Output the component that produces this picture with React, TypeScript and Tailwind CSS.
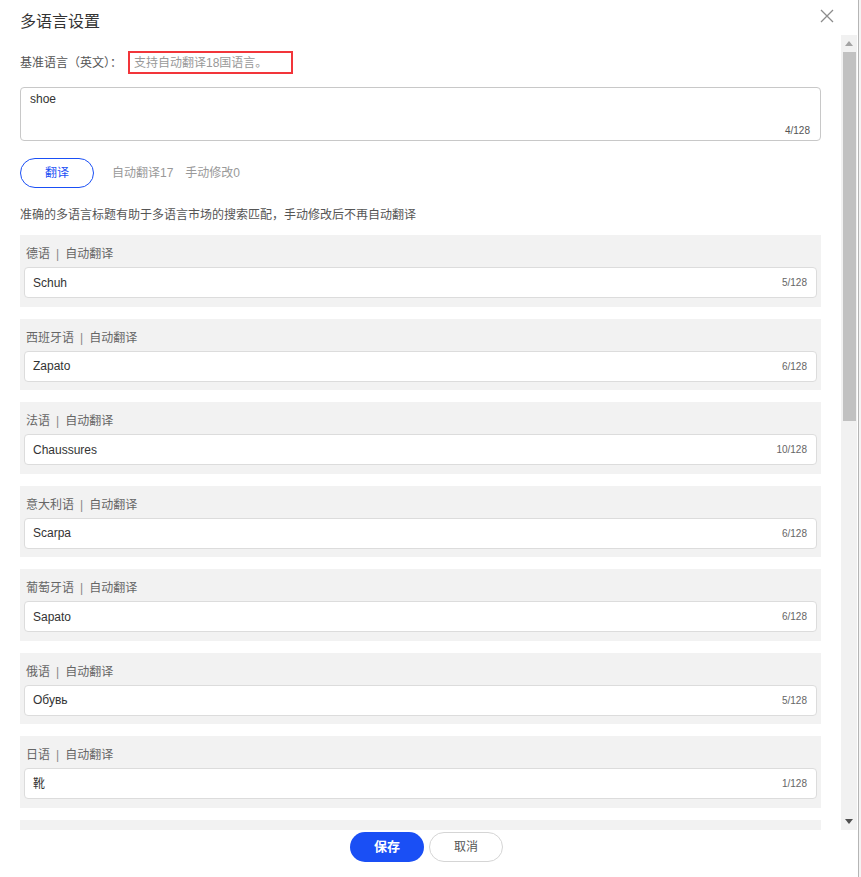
import React from "react";

const langs: { name: string; value: string; count: number }[] = [
  { name: "德语", value: "Schuh", count: 5 },
  { name: "西班牙语", value: "Zapato", count: 6 },
  { name: "法语", value: "Chaussures", count: 10 },
  { name: "意大利语", value: "Scarpa", count: 6 },
  { name: "葡萄牙语", value: "Sapato", count: 6 },
  { name: "俄语", value: "Обувь", count: 5 },
  { name: "日语", value: "靴", count: 1 },
  { name: "韩语", value: "신발", count: 2 },
  { name: "阿拉伯语", value: "حذاء", count: 4 },
  { name: "荷兰语", value: "Schoen", count: 6 },
  { name: "波兰语", value: "But", count: 3 },
  { name: "土耳其语", value: "Ayakkabı", count: 8 },
  { name: "泰语", value: "รองเท้า", count: 7 },
  { name: "越南语", value: "Giày", count: 4 },
  { name: "印尼语", value: "Sepatu", count: 6 },
  { name: "希伯来语", value: "נעל", count: 3 },
  { name: "瑞典语", value: "Sko", count: 3 },
];

function LangCard({ name, value, count }: { name: string; value: string; count: number }) {
  return (
    <div className="mb-[12px] h-[71.5px] shrink-0 bg-[#f2f2f2] px-[4px] pt-[11px]">
      <div className="flex h-[16px] items-center pl-[2px] text-[12px] leading-[16px] text-[#666]">
        <span>{name}</span>
        <span className="mx-[6px] text-[#888]">|</span>
        <span>自动翻译</span>
      </div>
      <div className="mt-[5px] flex h-[31px] items-center justify-between rounded-[4px] border border-[#dcdcdc] bg-white pl-[8px] pr-[9px]">
        <span className="text-[12px] text-[#333]">{value}</span>
        <span className="text-[10px] text-[#666]">{count}/128</span>
      </div>
    </div>
  );
}

export default function App() {
  return (
    <div className="flex h-[877px] w-[861px] overflow-hidden bg-white font-['Liberation_Sans','Noto_Sans_CJK_SC',sans-serif]">
      <div className="flex h-full w-[858px] flex-col">
        {/* header */}
        <div className="flex h-[35px] shrink-0 items-start justify-between pl-[20px] pr-[24px] pt-[10px]">
          <div className="text-[16px] leading-[24px] text-[#333]">多语言设置</div>
          <svg width="14" height="14" viewBox="0 0 14 14" className="mt-[-1px]">
            <path d="M1 1 L13 13 M13 1 L1 13" stroke="#8c8c8c" strokeWidth="1.3" fill="none" />
          </svg>
        </div>
        {/* body */}
        <div className="flex h-[795px] shrink-0">
          <div className="flex w-[841px] flex-col overflow-hidden px-[20px] pt-[16px]">
            <div className="flex h-[23px] shrink-0 items-center">
              <span className="w-[108px] shrink-0 text-[12px] text-[#555]">基准语言（英文）：</span>
              <div className="flex h-[23px] w-[165px] items-center border-2 border-[#f2353a] pl-[4px] text-[12px] text-[#999]">
                支持自动翻译18国语言。
              </div>
            </div>
            <div className="mt-[13px] flex h-[54px] shrink-0 flex-col justify-between rounded-[4px] border border-[#c8c8c8] pb-[3px] pl-[9px] pr-[10px] pt-[3px]">
              <div className="text-[12px] leading-[16px] text-[#333]">shoe</div>
              <div className="self-end text-[10px] leading-[12px] text-[#555]">4/128</div>
            </div>
            <div className="mt-[17px] flex h-[30px] shrink-0 items-center">
              <div className="flex h-[30px] w-[74px] items-center justify-center rounded-full border border-[#1a4ff5] text-[12px] text-[#1a4ff5]">
                翻译
              </div>
              <span className="ml-[18px] text-[12px] text-[#999]">自动翻译17</span>
              <span className="ml-[12px] text-[12px] text-[#999]">手动修改0</span>
            </div>
            <div className="mt-[19px] shrink-0 text-[12px] leading-[16px] text-[#555]">
              准确的多语言标题有助于多语言市场的搜索匹配，手动修改后不再自动翻译
            </div>
            <div className="mt-[12px] flex flex-col">
              {langs.map((l) => (
                <LangCard key={l.name} {...l} />
              ))}
            </div>
          </div>
          {/* scrollbar */}
          <div className="flex w-[16px] flex-col bg-[#f1f1f1]">
            <div className="flex h-[17px] items-center justify-center">
              <svg width="8" height="5" viewBox="0 0 8 5">
                <path d="M0 5 L4 0 L8 5 Z" fill="#a3a3a3" />
              </svg>
            </div>
            <div className="ml-[2px] h-[369px] w-[13px] bg-[#c1c1c1]" />
            <div className="flex-1" />
            <div className="flex h-[17px] items-center justify-center">
              <svg width="8" height="5" viewBox="0 0 8 5">
                <path d="M0 0 L8 0 L4 5 Z" fill="#505050" />
              </svg>
            </div>
          </div>
          <div className="w-[1px]" />
        </div>
        {/* footer */}
        <div className="flex shrink-0 justify-center gap-[5px] pr-[5px] pt-[2px]">
          <div className="flex h-[30px] w-[74px] items-center justify-center rounded-full bg-[#1a4ff5] text-[13px] font-bold text-white">
            保存
          </div>
          <div className="flex h-[30px] w-[74px] items-center justify-center rounded-full border border-[#d5d5d5] text-[12px] text-[#555]">
            取消
          </div>
        </div>
      </div>
      <div className="h-full w-[1px] bg-[#b5b5b5]" />
      <div className="h-full w-[2px] bg-[#f4f4f4]" />
    </div>
  );
}
